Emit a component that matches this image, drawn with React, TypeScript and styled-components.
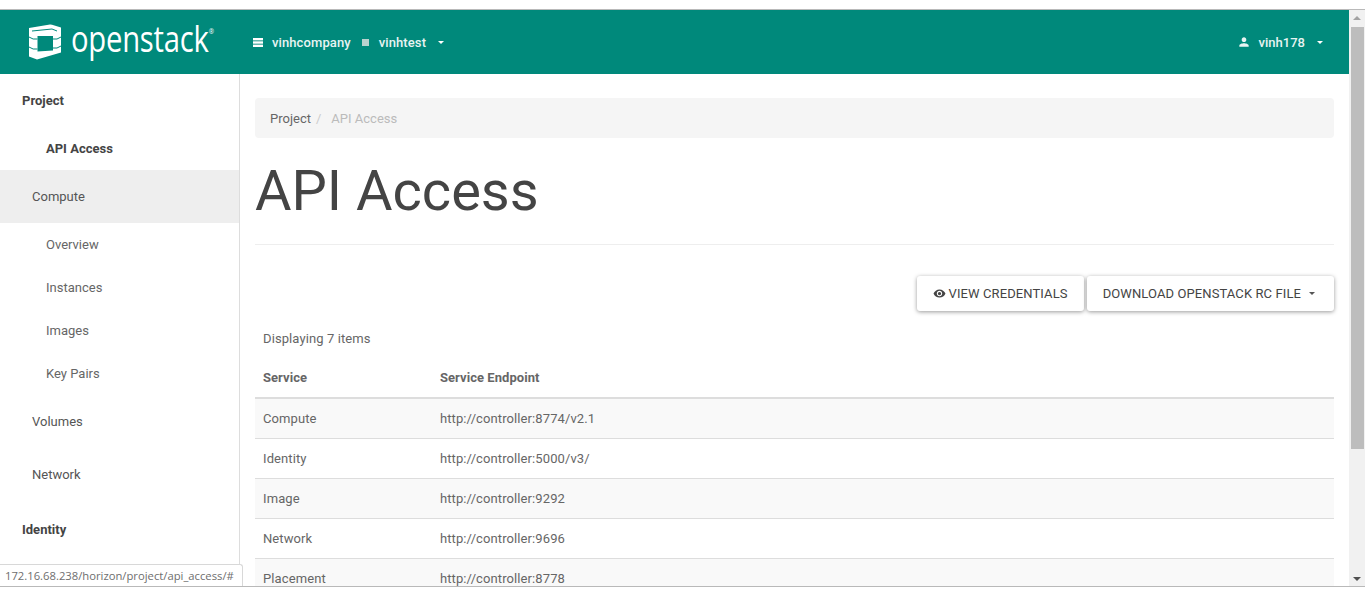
import { FC } from "react";
import styled, { createGlobalStyle } from "styled-components";
import { MdPerson, MdVisibility } from "react-icons/md";

const GlobalStyle = createGlobalStyle`
    html, body {
        margin: 0;
        height: 589px;
        overflow: hidden;
        background: #ffffff;
    }
    * {
        box-sizing: border-box;
    }
`
const Page = styled.div`
    position: relative;
    height: 589px;
    padding-top: 9px;
    font-family: Roboto, "Liberation Sans", sans-serif;
    font-size: 13px;
    color: #666666;
`
const Frame = styled.div`
    display: flex;
    height: 578px;
    border-top: 1px solid #b9b9b9;
    border-bottom: 1px solid #b9b9b9;
`
const Viewport = styled.div`
    flex: 1;
    min-width: 0;
    display: flex;
    flex-direction: column;
    overflow: hidden;
`
const TopBar = styled.header`
    flex: none;
    display: flex;
    align-items: center;
    height: 64px;
    background: #00897b;
    color: #ffffff;
`
const Brand = styled.div`
    display: flex;
    align-items: center;
    width: 253px;
    padding-left: 28px;
    gap: 9px;
`
const BrandName = styled.span`
    display: inline-block;
    position: relative;
    top: -4px;
    font-family: "Open Sans", "Noto Sans", sans-serif;
    font-size: 37px;
    line-height: 40px;
    letter-spacing: -0.3px;
    transform: scaleX(0.79);
    transform-origin: left center;
    sup {
        font-size: 8px;
        line-height: 0;
        vertical-align: 18px;
    }
`
const Picker = styled.div`
    display: flex;
    align-items: center;
    font-weight: 500;
    letter-spacing: 0.1px;
    color: #e8f4f2;
`
const PickerName = styled.span`
    margin-left: 9px;
`
const SquareIcon = styled.span`
    width: 7px;
    height: 7px;
    margin: 0 1px 0 11px;
    background: #b9d2ce;
`
const Caret = styled.span<{ $dark?: boolean }>`
    display: inline-block;
    width: 0;
    height: 0;
    margin-left: ${(p) => (p.$dark ? "8px" : "12px")};
    margin-right: ${(p) => (p.$dark ? "3px" : "0")};
    border-top: 3px solid ${(p) => (p.$dark ? "#555555" : "#ffffff")};
    border-left: 3px solid transparent;
    border-right: 3px solid transparent;
`
const UserMenu = styled.div`
    margin-left: auto;
    display: flex;
    align-items: center;
    padding-right: 26px;
    font-weight: 500;
    color: #e8f4f2;
    svg {
        margin-right: 8px;
    }
`
const Body = styled.div`
    flex: 1;
    min-height: 0;
    display: flex;
`
const SideNav = styled.nav`
    flex: none;
    width: 240px;
    border-right: 1px solid #dddddd;
`
const NavHeading = styled.div<{ $height: number }>`
    display: flex;
    align-items: center;
    height: ${(p) => p.$height}px;
    padding-left: 22px;
    font-weight: 700;
    color: #444444;
`
const NavGroup = styled.div<{ $active?: boolean }>`
    display: flex;
    align-items: center;
    height: 53px;
    padding-left: 32px;
    color: #555555;
    background: ${(p) => (p.$active ? "#eeeeee" : "transparent")};
`
const NavItem = styled.div<{ $current?: boolean }>`
    display: flex;
    align-items: center;
    height: ${(p) => (p.$current ? 44 : 43)}px;
    padding-left: 46px;
    font-weight: ${(p) => (p.$current ? 700 : 400)};
    color: ${(p) => (p.$current ? "#444444" : "#666666")};
`
const Main = styled.main`
    flex: 1;
    min-width: 0;
    padding: 24px 15px 0;
`
const Breadcrumb = styled.div`
    display: flex;
    align-items: center;
    height: 40px;
    padding: 0 15px;
    background: #f5f5f5;
    border-radius: 4px;
`
const CrumbSep = styled.span`
    padding: 0 10px 0 5px;
    color: #cccccc;
`
const CrumbCurrent = styled.span`
    color: #bbbbbb;
`
const PageHeader = styled.div`
    height: 107px;
    border-bottom: 1px solid #eeeeee;
`
const Title = styled.h1`
    margin: 0;
    padding-top: 20px;
    font-size: 56px;
    line-height: 67px;
    font-weight: 400;
    color: #444444;
`
const Actions = styled.div`
    display: flex;
    justify-content: flex-end;
    gap: 3px;
    margin-top: 31px;
`
const Button = styled.button`
    display: flex;
    align-items: center;
    height: 35px;
    padding: 0 16px;
    border: 0;
    border-radius: 3px;
    background: #ffffff;
    font: inherit;
    font-size: 13px;
    letter-spacing: 0.1px;
    color: #444444;
    box-shadow: 0 1px 4px rgba(0, 0, 0, 0.4);
    svg {
        margin-right: 3px;
    }
`
const Count = styled.div`
    padding: 0 8px;
    margin-top: 19px;
    line-height: 17px;
    letter-spacing: 0.1px;
`
const Table = styled.table`
    width: 100%;
    margin-top: 10px;
    border-collapse: collapse;
    table-layout: fixed;
`
const HeadCell = styled.th`
    height: 41px;
    padding: 0 8px;
    text-align: left;
    font-weight: 700;
    letter-spacing: 0.05px;
    border-bottom: 2px solid #dddddd;
    &:first-child {
        width: 177px;
    }
`
const Row = styled.tr`
    &:nth-child(odd) {
        background: #f9f9f9;
    }
`
const Cell = styled.td`
    height: 40px;
    padding: 0 8px;
    letter-spacing: 0.1px;
    border-bottom: 1px solid #dddddd;
`
const ScrollTrack = styled.div`
    flex: none;
    position: relative;
    width: 16px;
    background: #f1f1f1;
`
const ScrollThumb = styled.div`
    position: absolute;
    top: 17px;
    left: 2px;
    right: 1px;
    height: 422px;
    background: #bdbdbd;
`
const ScrollArrow = styled.span<{ $down?: boolean }>`
    position: absolute;
    left: 4px;
    width: 0;
    height: 0;
    border-left: 4px solid transparent;
    border-right: 4px solid transparent;
    ${(p) =>
        p.$down
            ? "bottom: 5px; border-top: 4px solid #505050;"
            : "top: 6px; border-bottom: 4px solid #a3a3a3;"}
`
const StatusBubble = styled.div`
    position: absolute;
    left: 0;
    bottom: 3px;
    height: 22px;
    padding: 3px 8px 0 5px;
    background: #ffffff;
    border: 1px solid #d8d8d8;
    border-left: 0;
    border-bottom: 0;
    border-top-right-radius: 3px;
    font-family: "Open Sans", "Noto Sans", sans-serif;
    font-size: 11.25px;
    line-height: 16px;
    color: #6e6e6e;
`

const endpoints = [
    { service: "Compute", url: "http://controller:8774/v2.1" },
    { service: "Identity", url: "http://controller:5000/v3/" },
    { service: "Image", url: "http://controller:9292" },
    { service: "Network", url: "http://controller:9696" },
    { service: "Placement", url: "http://controller:8778" },
];

const computeItems = ["Overview", "Instances", "Images", "Key Pairs"];

const LogoMark: FC = () => (
    <svg width="34" height="36" viewBox="0 0 34 36">
        <path
            fillRule="evenodd"
            fill="#ffffff"
            d="M1 4 L22 0.5 Q23 0.4 24 0.8 L33 3.5 V28.5 L9 35.6 L1 32.5 Z M9.5 12 V27.5 L25 26.5 V12 Z"
        />
        <path
            fill="none"
            stroke="#00897b"
            d="M1 13 Q5 16 9.5 15 M1 23 Q5 26 9.5 25 M25 15 Q29 16 33 13 M25 24 Q29 25 33 22 M4 7 L24 5 L29 7"
        />
    </svg>
);

const ListIcon: FC = () => (
    <svg width="10" height="9" viewBox="0 0 10 9" fill="#ffffff">
        <rect y="0" width="10" height="2.4" />
        <rect y="3.3" width="10" height="2.4" />
        <rect y="6.6" width="10" height="2.4" />
    </svg>
);

const App: FC = () => {
    return (
        <Page>
            <GlobalStyle />
            <Frame>
                <Viewport>
                    <TopBar>
                        <Brand>
                            <LogoMark />
                            <BrandName>openstack<sup>®</sup></BrandName>
                        </Brand>
                        <Picker>
                            <ListIcon />
                            <PickerName>vinhcompany</PickerName>
                            <SquareIcon />
                            <PickerName>vinhtest</PickerName>
                            <Caret />
                        </Picker>
                        <UserMenu>
                            <MdPerson size={14} />
                            vinh178
                            <Caret />
                        </UserMenu>
                    </TopBar>
                    <Body>
                        <SideNav>
                            <NavHeading $height={52}>Project</NavHeading>
                            <NavItem $current>API Access</NavItem>
                            <NavGroup $active>Compute</NavGroup>
                            {computeItems.map((item) => (
                                <NavItem key={item}>{item}</NavItem>
                            ))}
                            <NavGroup>Volumes</NavGroup>
                            <NavGroup>Network</NavGroup>
                            <NavHeading $height={56}>Identity</NavHeading>
                        </SideNav>
                        <Main>
                            <Breadcrumb>
                                Project
                                <CrumbSep>/</CrumbSep>
                                <CrumbCurrent>API Access</CrumbCurrent>
                            </Breadcrumb>
                            <PageHeader>
                                <Title>API Access</Title>
                            </PageHeader>
                            <Actions>
                                <Button>
                                    <MdVisibility size={13} />
                                    VIEW CREDENTIALS
                                </Button>
                                <Button>
                                    DOWNLOAD OPENSTACK RC FILE
                                    <Caret $dark />
                                </Button>
                            </Actions>
                            <Count>Displaying 7 items</Count>
                            <Table>
                                <thead>
                                    <tr>
                                        <HeadCell>Service</HeadCell>
                                        <HeadCell>Service Endpoint</HeadCell>
                                    </tr>
                                </thead>
                                <tbody>
                                    {endpoints.map((row) => (
                                        <Row key={row.service}>
                                            <Cell>{row.service}</Cell>
                                            <Cell>{row.url}</Cell>
                                        </Row>
                                    ))}
                                </tbody>
                            </Table>
                        </Main>
                    </Body>
                </Viewport>
                <ScrollTrack>
                    <ScrollArrow />
                    <ScrollThumb />
                    <ScrollArrow $down />
                </ScrollTrack>
            </Frame>
            <StatusBubble>172.16.68.238/horizon/project/api_access/#</StatusBubble>
        </Page>
    );
};

export default App;
